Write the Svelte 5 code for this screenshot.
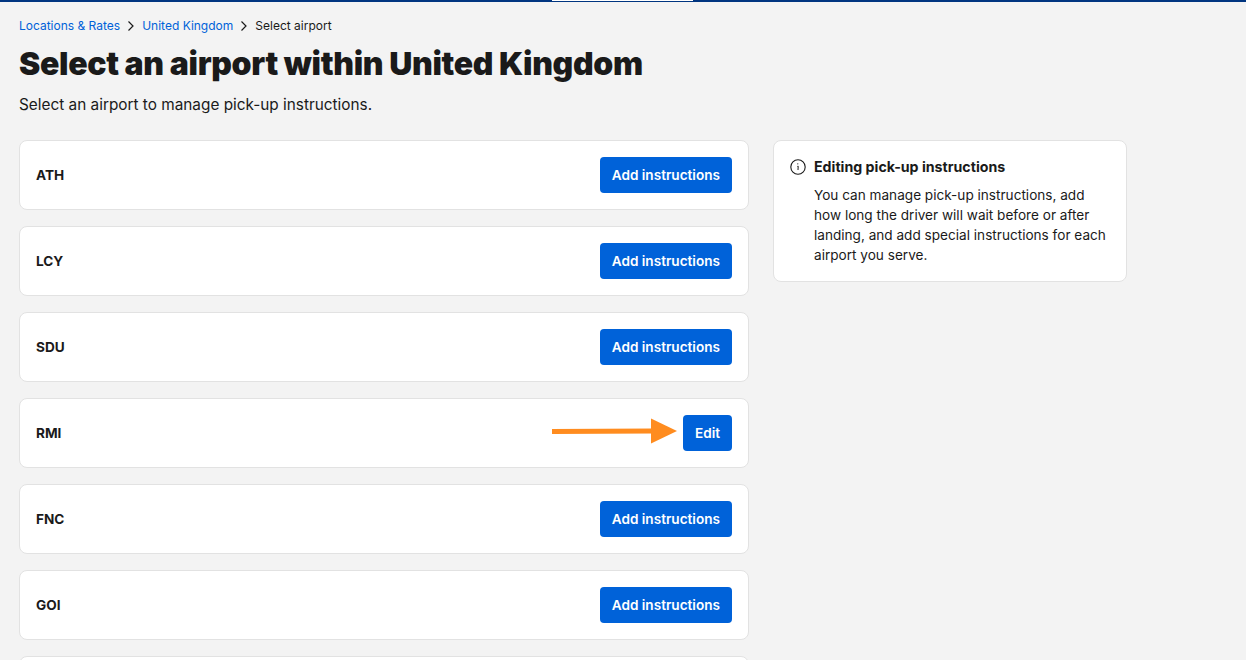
<script lang="ts">
  const airports = [
    { code: "ATH", action: "Add instructions" },
    { code: "LCY", action: "Add instructions" },
    { code: "SDU", action: "Add instructions" },
    { code: "RMI", action: "Edit", arrow: true },
    { code: "FNC", action: "Add instructions" },
    { code: "GOI", action: "Add instructions" },
    { code: "", action: "" },
  ];
</script>

<div class="topbar"><span class="tab"></span></div>

<main class="page">
  <nav class="crumbs">
    <a href="#locations">Locations &amp; Rates</a>
    <svg viewBox="0 0 10 12" width="10" height="12" fill="none" stroke="currentColor" stroke-width="1.2"><path d="M2.5 1.5 7 6l-4.5 4.5"/></svg>
    <a href="#uk">United Kingdom</a>
    <svg viewBox="0 0 10 12" width="10" height="12" fill="none" stroke="currentColor" stroke-width="1.2"><path d="M2.5 1.5 7 6l-4.5 4.5"/></svg>
    <span>Select airport</span>
  </nav>

  <h1>Select an airport within United Kingdom</h1>
  <p class="lead">Select an airport to manage pick-up instructions.</p>

  <div class="columns">
    <div class="list">
      {#each airports as airport}
        <div class="card">
          <strong>{airport.code}</strong>
          {#if airport.action}
            <button>{airport.action}</button>
          {/if}
          {#if airport.arrow}
            <svg class="arrow" viewBox="0 0 126 26" width="126" height="26">
              <path d="M0 13.6 100 13" stroke="#ff8c1f" stroke-width="5" fill="none"/>
              <path d="M99 0.500 L125 13 L99 25.500 Z" fill="#ff8c1f"/>
            </svg>
          {/if}
        </div>
      {/each}
    </div>

    <aside class="note">
      <svg class="info" viewBox="0 0 16 16" width="16" height="16" fill="none" stroke="#1a1a1a">
        <circle cx="8" cy="8" r="7.2" stroke-width="1.1"/>
        <path d="M7.400 7.400l.8-.2-.2 3.800" stroke-width="1"/>
        <circle cx="7.800" cy="4.800" r="0.600" fill="#1a1a1a" stroke="none"/>
      </svg>
      <div>
        <h2>Editing pick-up instructions</h2>
        <p>You can manage pick-up instructions, add how long the driver will wait before or after landing, and add special instructions for each airport you serve.</p>
      </div>
    </aside>
  </div>
</main>

<style>
  :global(body) {
    margin: 0;
    background: #f3f3f3;
    overflow: hidden;
    height: 660px;
    font-family: Inter, "Liberation Sans", sans-serif;
    color: #1a1a1a;
  }

  .topbar {
    height: 2px;
    background: #003580;
    padding-left: 552px;
  }

  .tab {
    display: block;
    width: 141px;
    height: 1px;
    background: #fff;
  }

  .page {
    padding: 16px 0 0 19px;
  }

  .crumbs {
    display: flex;
    align-items: center;
    gap: 6px;
    height: 16px;
    font-size: 12px;
    line-height: 16px;
  }

  .crumbs a {
    color: #0062d9;
    text-decoration: none;
  }

  h1 {
    margin: 10px 0 0;
    font-size: 32px;
    line-height: 40px;
    font-weight: 900;
    letter-spacing: -0.35px;
  }

  .lead {
    margin: 9px 0 0;
    font-size: 15.35px;
    line-height: 24px;
  }

  .columns {
    display: flex;
    align-items: flex-start;
    gap: 24px;
    margin-top: 23px;
  }

  .list {
    display: flex;
    flex-direction: column;
    gap: 16px;
    width: 730px;
  }

  .card {
    position: relative;
    box-sizing: border-box;
    height: 70px;
    display: flex;
    align-items: center;
    justify-content: space-between;
    padding: 0 16px;
    background: #fff;
    border: 1px solid #e2e2e2;
    border-radius: 8px;
  }

  .card strong {
    font-size: 13.6px;
    font-weight: 700;
  }

  .card button {
    height: 36px;
    padding: 0 12px;
    border: none;
    border-radius: 4px;
    background: #0062d9;
    color: #fff;
    font-family: inherit;
    font-size: 13.6px;
    font-weight: 600;
  }

  .arrow {
    position: absolute;
    left: 532px;
    top: 19px;
  }

  .note {
    box-sizing: border-box;
    width: 354px;
    height: 142px;
    display: flex;
    gap: 8px;
    padding: 16px;
    background: #fff;
    border: 1px solid #e2e2e2;
    border-radius: 8px;
  }

  .info {
    flex: none;
    margin-top: 2px;
  }

  .note h2 {
    margin: 0;
    font-size: 14.2px;
    line-height: 20px;
    font-weight: 700;
  }

  .note p {
    margin: 8px 0 0;
    font-size: 13.6px;
    line-height: 20px;
  }
</style>
